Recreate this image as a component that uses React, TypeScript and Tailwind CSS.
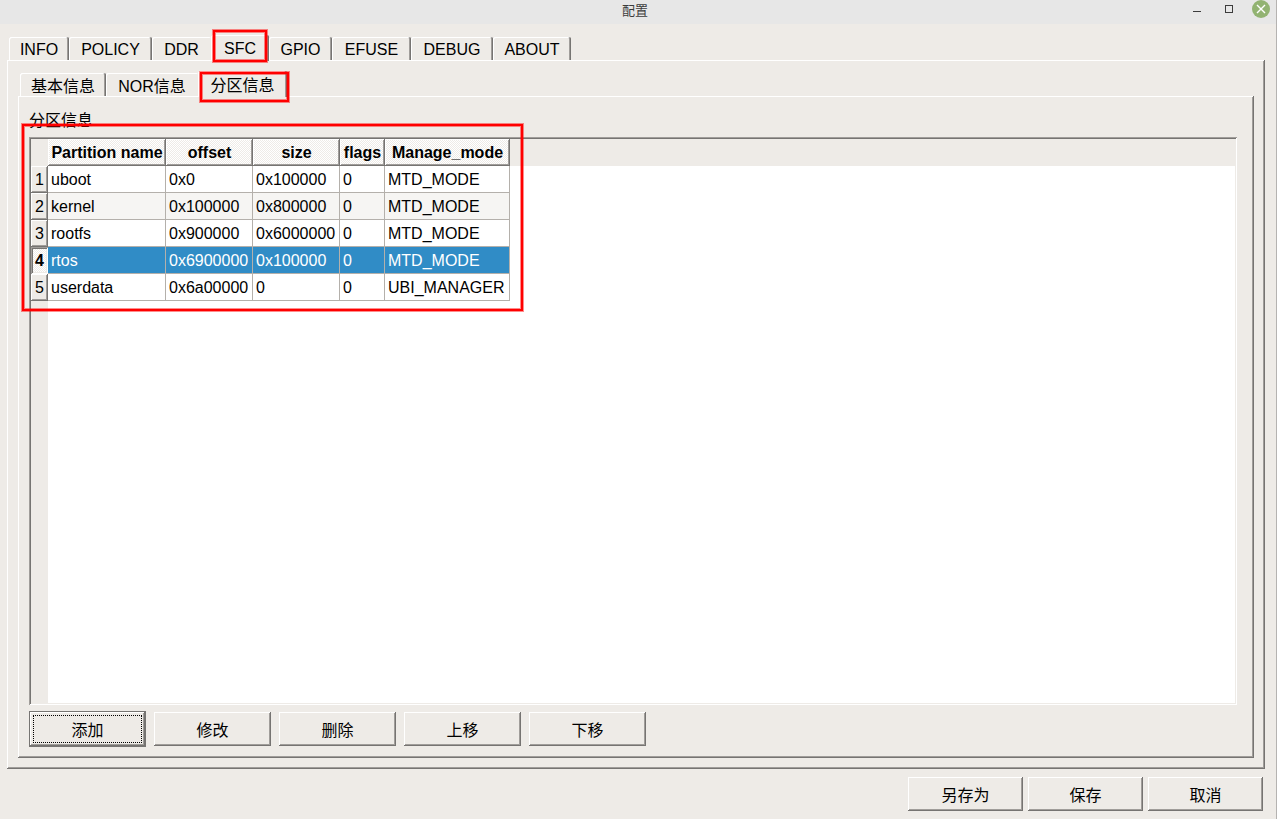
type Tab = {
  label: string;
  width: string;
};

type Partition = {
  name: string;
  offset: string;
  size: string;
  flags: string;
  mode: string;
};

const mainTabs: Tab[] = [
  { label: "INFO", width: "w-[60px]" },
  { label: "POLICY", width: "w-[83px]" },
  { label: "DDR", width: "w-[59px]" },
  { label: "SFC", width: "w-[58px]" },
  { label: "GPIO", width: "w-[63px]" },
  { label: "EFUSE", width: "w-[79px]" },
  { label: "DEBUG", width: "w-[82px]" },
  { label: "ABOUT", width: "w-[78px]" },
];

const sfcTabs: Tab[] = [
  { label: "基本信息", width: "w-[86px]" },
  { label: "NOR信息", width: "w-[92px]" },
  { label: "分区信息", width: "w-[89px]" },
];

const columns = [
  { label: "Partition name", width: "w-[118px]" },
  { label: "offset", width: "w-[87px]" },
  { label: "size", width: "w-[87px]" },
  { label: "flags", width: "w-[45px]" },
  { label: "Manage_mode", width: "w-[125px]" },
];

const partitions: Partition[] = [
  { name: "uboot", offset: "0x0", size: "0x100000", flags: "0", mode: "MTD_MODE" },
  { name: "kernel", offset: "0x100000", size: "0x800000", flags: "0", mode: "MTD_MODE" },
  { name: "rootfs", offset: "0x900000", size: "0x6000000", flags: "0", mode: "MTD_MODE" },
  { name: "rtos", offset: "0x6900000", size: "0x100000", flags: "0", mode: "MTD_MODE" },
  { name: "userdata", offset: "0x6a00000", size: "0", flags: "0", mode: "UBI_MANAGER" },
];

const raised =
  "shadow-[inset_-1px_-1px_#767472,inset_1px_1px_#fff,inset_-2px_-2px_#a09d9a]";
const sunken =
  "shadow-[inset_1px_1px_#a09d9a,inset_-1px_-1px_#fff,inset_2px_2px_#767472,inset_-2px_-2px_#eeebe7]";
const dither =
  "bg-[repeating-conic-gradient(#fff_0_25%,#eeebe7_0_50%)] bg-[length:2px_2px]";

function Highlight({ className }: { className: string }) {
  return (
    <span
      aria-hidden="true"
      className={`pointer-events-none absolute z-10 border-2 border-[#ff0000] shadow-[0_0_0_1px_rgba(255,0,0,0.45),inset_0_0_0_1px_rgba(255,0,0,0.45)] ${className}`}
    />
  );
}

type TabBarProps = {
  tabs: Tab[];
  selected: number;
  pad: string;
  highlight: string;
};

function TabBar({ tabs, selected, pad, highlight }: TabBarProps) {
  return (
    <div role="tablist" className="ml-[2px] flex h-[25px] items-end leading-4">
      {tabs.map((tab, i) => {
        if (i === selected) {
          return (
            <button
              key={tab.label}
              role="tab"
              aria-selected="true"
              className={`relative -mb-px h-[26px] shrink-0 rounded-t-[2px] bg-[#eeebe7] pb-px shadow-[inset_-1px_0_#767472,inset_1px_1px_#fff,inset_-2px_0_#a09d9a] ${pad} ${tab.width}`}
            >
              {tab.label}
              <Highlight className={highlight} />
            </button>
          );
        }
        // the selected tab covers the right edge of the one before it
        const edge =
          i === selected - 1
            ? "shadow-[inset_1px_1px_#fff]"
            : "shadow-[inset_-1px_0_#767472,inset_1px_1px_#fff,inset_-2px_0_#a09d9a]";
        return (
          <button
            key={tab.label}
            role="tab"
            aria-selected="false"
            className={`h-[23px] shrink-0 rounded-t-[2px] ${pad} ${edge} ${tab.width}`}
          >
            {tab.label}
          </button>
        );
      })}
    </div>
  );
}

function PushButton({ label, width, focused }: { label: string; width: string; focused?: boolean }) {
  if (focused) {
    return (
      <button className={`h-[36px] border border-[#767472] p-[3px] ${raised} ${width}`}>
        <span className="flex h-full items-center justify-center border border-dotted border-black pt-1">
          {label}
        </span>
      </button>
    );
  }
  return <button className={`h-[34px] pt-1 ${raised} ${width}`}>{label}</button>;
}

function TitleBar() {
  return (
    <header className="grid h-[24px] grid-cols-[1fr_auto_1fr] bg-[#e7e7e7] pr-[6px] text-[#3c3c3c]">
      <h1 className="col-start-2 text-[13px] leading-[22px]">配置</h1>
      <div className="flex h-[18px] items-center justify-end gap-[14px]">
        <button aria-label="Minimize">
          <svg width="18" height="18" viewBox="0 0 18 18" className="block">
            <path d="M5 11.5h8" stroke="#3c3c3c" />
          </svg>
        </button>
        <button aria-label="Maximize">
          <svg width="18" height="18" viewBox="0 0 18 18" className="block">
            <rect x="5.5" y="5.5" width="7" height="7" fill="none" stroke="#3c3c3c" />
          </svg>
        </button>
        <button aria-label="Close">
          <svg width="18" height="18" viewBox="0 0 18 18" className="block">
            <circle cx="9" cy="9" r="9" fill="#92b372" />
            <path d="M5 5l8 8M13 5l-8 8" stroke="#fff" strokeWidth="1.4" />
          </svg>
        </button>
      </div>
    </header>
  );
}

function PartitionTable({ selected }: { selected: number }) {
  return (
    <table className="w-[479px] table-fixed border-separate border-spacing-0 text-left leading-6">
      <thead>
        <tr>
          <td className="h-[27px] w-[17px] p-0" />
          {columns.map((col) => (
            <th
              key={col.label}
              scope="col"
              className={`h-[27px] p-0 text-center font-bold whitespace-nowrap ${col.width} ${dither} ${raised}`}
            >
              {col.label}
            </th>
          ))}
        </tr>
      </thead>
      <tbody>
        {partitions.map((row, i) => {
          const active = i === selected;
          const cell = "h-[27px] border-r border-b border-[#b4b0ab] pt-[2px] pr-0 pb-0 pl-[3px] whitespace-nowrap";
          const tone = active
            ? "bg-[#308cc6] text-white"
            : i % 2
              ? "bg-[#f6f5f3]"
              : "bg-white";
          return (
            <tr key={row.name} className={tone}>
              <th
                scope="row"
                className={`p-0 text-center text-black ${
                  active ? `font-bold ${dither} ${sunken}` : `bg-[#eeebe7] font-normal ${raised}`
                }`}
              >
                {i + 1}
              </th>
              <td className={cell}>{row.name}</td>
              <td className={cell}>{row.offset}</td>
              <td className={cell}>{row.size}</td>
              <td className={cell}>{row.flags}</td>
              <td className={cell}>{row.mode}</td>
            </tr>
          );
        })}
      </tbody>
    </table>
  );
}

export default function App() {
  return (
    <div className="flex min-h-screen flex-col border-r border-[#b5b3b1] bg-[#eeebe7] font-['Liberation_Sans','Noto_Sans_CJK_SC',sans-serif] text-base text-black">
      <TitleBar />
      <main className="flex grow flex-col pt-[11px] pr-[11px] pb-2 pl-[7px]">
        <TabBar
          tabs={mainTabs}
          selected={3}
          pad="pt-[2px]"
          highlight="-top-[5px] right-[2px] -bottom-px left-[2px]"
        />
        <section className={`flex grow flex-col p-[11px] ${raised}`}>
          <TabBar
            tabs={sfcTabs}
            selected={2}
            pad="pt-[5px]"
            highlight="top-px -right-[2px] -bottom-[5px] left-[2px]"
          />
          <div className={`flex grow flex-col pt-[11px] pr-[17px] pb-[11px] pl-[11px] ${raised}`}>
            <h2 className="h-[30px] leading-[28px]">分区信息</h2>
            <div className={`flex grow p-[2px] ${sunken}`}>
              <div className="grow bg-[linear-gradient(to_right,#eeebe7_17px,transparent_17px),linear-gradient(#eeebe7_27px,#fff_27px)]">
                <div className="relative w-fit">
                  <PartitionTable selected={3} />
                  <Highlight className="-top-[15px] -right-[13px] -bottom-[10px] -left-[9px]" />
                </div>
              </div>
            </div>
            <div className="mt-[6px] flex items-center gap-2">
              <PushButton label="添加" width="w-[117px]" focused />
              <PushButton label="修改" width="w-[117px]" />
              <PushButton label="删除" width="w-[117px]" />
              <PushButton label="上移" width="w-[117px]" />
              <PushButton label="下移" width="w-[117px]" />
            </div>
          </div>
        </section>
        <footer className="mt-2 flex justify-end gap-[5px] pr-[2px]">
          <PushButton label="另存为" width="w-[115px]" />
          <PushButton label="保存" width="w-[115px]" />
          <PushButton label="取消" width="w-[115px]" />
        </footer>
      </main>
    </div>
  );
}
